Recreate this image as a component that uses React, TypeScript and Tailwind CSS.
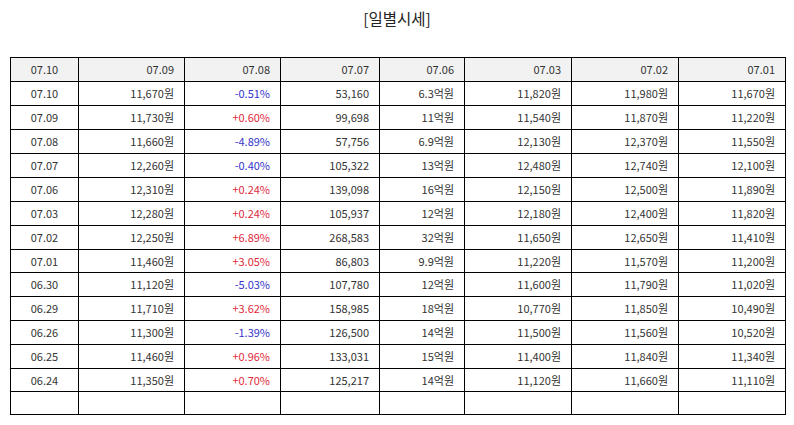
const header = ['07.10', '07.09', '07.08', '07.07', '07.06', '07.03', '07.02', '07.01'];

const rows: string[][] = [
  ['07.10', '11,670원', '-0.51%', '53,160', '6.3억원', '11,820원', '11,980원', '11,670원'],
  ['07.09', '11,730원', '+0.60%', '99,698', '11억원', '11,540원', '11,870원', '11,220원'],
  ['07.08', '11,660원', '-4.89%', '57,756', '6.9억원', '12,130원', '12,370원', '11,550원'],
  ['07.07', '12,260원', '-0.40%', '105,322', '13억원', '12,480원', '12,740원', '12,100원'],
  ['07.06', '12,310원', '+0.24%', '139,098', '16억원', '12,150원', '12,500원', '11,890원'],
  ['07.03', '12,280원', '+0.24%', '105,937', '12억원', '12,180원', '12,400원', '11,820원'],
  ['07.02', '12,250원', '+6.89%', '268,583', '32억원', '11,650원', '12,650원', '11,410원'],
  ['07.01', '11,460원', '+3.05%', '86,803', '9.9억원', '11,220원', '11,570원', '11,200원'],
  ['06.30', '11,120원', '-5.03%', '107,780', '12억원', '11,600원', '11,790원', '11,020원'],
  ['06.29', '11,710원', '+3.62%', '158,985', '18억원', '10,770원', '11,850원', '10,490원'],
  ['06.26', '11,300원', '-1.39%', '126,500', '14억원', '11,500원', '11,560원', '10,520원'],
  ['06.25', '11,460원', '+0.96%', '133,031', '15억원', '11,400원', '11,840원', '11,340원'],
  ['06.24', '11,350원', '+0.70%', '125,217', '14억원', '11,120원', '11,660원', '11,110원'],
];

const widths = [68, 106, 96, 99, 85, 107, 107, 107];

// row pitch in the screenshot is not quite uniform (24/23px)
const bodyHeights = ['h-[24px]', 'h-[24px]', 'h-[24px]', 'h-[24px]', 'h-[24px]', 'h-[24px]', 'h-[24px]', 'h-[23px]', 'h-[24px]', 'h-[24px]', 'h-[24px]', 'h-[24px]', 'h-[24px]'];

export default function App() {
  return (
    <div
      className="w-[794px] h-[425px] bg-white text-[#333] px-[10px] pt-[7px]"
      style={{ fontFamily: "'Noto Sans CJK KR', 'Noto Sans', sans-serif" }}
    >
      {/* Title */}
      <div className="text-center text-[15.5px] leading-[22px] text-[#222]">[일별시세]</div>

      {/* Daily price table */}
      <table className="mt-[28px] w-[775px] table-fixed border-collapse text-[11px] leading-none">
        <colgroup>
          {widths.map((w, i) => (
            <col key={i} style={{ width: w }} />
          ))}
        </colgroup>
        <thead>
          <tr className="bg-[#f2f2f2]">
            {header.map((h, i) => (
              <th
                key={i}
                className={`h-[24px] border border-black p-0 font-normal ${i === 0 ? 'text-center' : 'text-right pr-[10px]'}`}
              >
                {h}
              </th>
            ))}
          </tr>
        </thead>
        <tbody>
          {rows.map((r, ri) => (
            <tr key={ri}>
              {r.map((c, ci) => {
                let color = '';
                if (ci === 2) color = c.startsWith('-') ? 'text-[#3333cc]' : 'text-[#e02a3a]';
                return (
                  <td
                    key={ci}
                    className={`${ri === 12 ? 'h-[23px]' : bodyHeights[ri]} border border-black p-0 ${ci === 0 ? 'text-center' : 'text-right pr-[10px]'} ${color}`}
                  >
                    {c}
                  </td>
                );
              })}
            </tr>
          ))}
          <tr>
            {widths.map((_, i) => (
              <td key={i} className="h-[23px] border border-black p-0" />
            ))}
          </tr>
        </tbody>
      </table>
    </div>
  );
}
